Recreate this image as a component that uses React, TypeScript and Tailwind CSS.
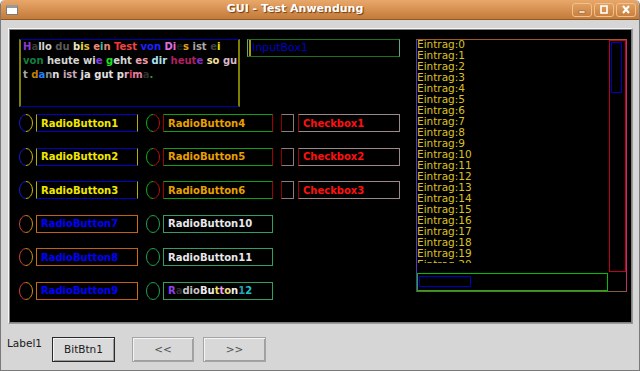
import React from 'react';

type Seg = [string, string];

const memo: Seg[][] = [
  [
    ['H', '#8a3ad0'], ['a', '#3a3a3a'], ['llo ', '#d4d4d4'], ['du ', '#5a5a5a'],
    ['b', '#e4e4c8'], ['i', '#e8e040'], ['s ', '#e0c040'],
    ['e', '#f08878'], ['i', '#40c0a8'], ['n ', '#e88878'],
    ['T', '#ff3030'], ['est ', '#e84848'], ['von ', '#2020ff'], ['Di', '#e070e0'],
    ['e', '#1e1e1e'], ['s ', '#e0a020'], ['ist ', '#a8a8a8'], ['e', '#404040'], ['i', '#e8e000'],
  ],
  [
    ['von ', '#108040'], ['heute wi', '#d4d4d4'], ['e ', '#8040e0'], ['g', '#20e020'],
    ['eht ', '#d4d4d4'], ['es ', '#f0a0b0'], ['dir ', '#b0e0f0'], ['heut', '#b02060'],
    ['e ', '#8030c8'], ['so ', '#f0e0a0'], ['gu', '#d8b8c8'],
  ],
  [
    ['t ', '#a8a8a8'], ['d', '#c08000'], ['a', '#2080ff'], ['n', '#909090'], ['n ', '#e0e0e0'],
    ['ist ', '#c8a8b8'], ['ja gut p', '#e0e0e0'], ['r', '#e0b0c8'], ['i', '#e04060'],
    ['m', '#e080a0'], ['a', '#303030'], ['.', '#20a020'],
  ],
];

const rb12: Seg[] = [
  ['R', '#9040f0'], ['a', '#303030'], ['dio', '#c4c4c4'], ['Bu', '#ececec'], ['t', '#f0e060'],
  ['t', '#f0a0f0'], ['o', '#f0e080'], ['n', '#f0f0f0'], ['1', '#20a0b0'], ['2', '#20c0d0'],
];

const Oval = ({ l, r }: { l: string; r: string }) => (
  <svg width="14" height="18" viewBox="0 0 14 18" className="shrink-0">
    <path d="M7 0.5 A6.5 8.5 0 0 0 7 17.5" fill="none" stroke={l} />
    <path d="M7 0.5 A6.5 8.5 0 0 1 7 17.5" fill="none" stroke={r} />
  </svg>
);

const Segs = ({ s }: { s: Seg[] }) => (
  <>
    {s.map(([t, c], i) => (
      <span key={i} style={{ color: c }}>{t}</span>
    ))}
  </>
);

type Radio = { l: string; r: string; box: string; text: string; label: React.ReactNode };

const col1: Radio[] = [
  { l: '#1818d8', r: '#c8b800', box: 'border-y-[#0000c8] border-x-[#b8b000]', text: 'text-[#f0e800]', label: 'RadioButton1' },
  { l: '#1818d8', r: '#c8b800', box: 'border-y-[#0000c8] border-x-[#b8b000]', text: 'text-[#f0e800]', label: 'RadioButton2' },
  { l: '#1818d8', r: '#c8b800', box: 'border-y-[#0000c8] border-x-[#b8b000]', text: 'text-[#f0e800]', label: 'RadioButton3' },
  { l: '#d04040', r: '#d09000', box: 'border-y-[#c06018] border-x-[#c87010]', text: 'text-[#0000ff]', label: 'RadioButton7' },
  { l: '#d04040', r: '#d09000', box: 'border-y-[#c06018] border-x-[#c87010]', text: 'text-[#0000ff]', label: 'RadioButton8' },
  { l: '#d04040', r: '#d09000', box: 'border-y-[#c06018] border-x-[#c87010]', text: 'text-[#0000ff]', label: 'RadioButton9' },
];

const col2: Radio[] = [
  { l: '#10b010', r: '#b01010', box: 'border-y-[#10a010] border-x-[#a00000]', text: 'text-[#e8a000]', label: 'RadioButton4' },
  { l: '#10b010', r: '#b01010', box: 'border-y-[#10a010] border-x-[#a00000]', text: 'text-[#e8a000]', label: 'RadioButton5' },
  { l: '#10b010', r: '#b01010', box: 'border-y-[#10a010] border-x-[#a00000]', text: 'text-[#e8a000]', label: 'RadioButton6' },
  { l: '#20a050', r: '#20a050', box: 'border-[#30a060]', text: 'text-[#e8e8e8]', label: 'RadioButton10' },
  { l: '#20a050', r: '#20a050', box: 'border-[#30a060]', text: 'text-[#e8e8e8]', label: 'RadioButton11' },
  { l: '#20a050', r: '#20a050', box: 'border-[#30a060]', text: 'text-[#e8e8e8]', label: <Segs s={rb12} /> },
];

const checks = ['Checkbox1', 'Checkbox2', 'Checkbox3', '', '', ''];

const items = Array.from({ length: 21 }, (_, i) => `Eintrag:${i}`);

const App: React.FC = () => {
  return (
    <div className="w-[640px] h-[371px] overflow-hidden flex flex-col bg-[#d6d6d6] font-['DejaVu_Sans','Liberation_Sans',sans-serif] border-x border-b border-[#7a7a7a] rounded-t-[5px]">
      {/* Titelleiste */}
      <div className="h-[20px] shrink-0 flex items-center bg-linear-to-b from-[#e8a86a] to-[#c47a38] border-b border-[#8c5a28] rounded-t-[5px]">
        <div className="ml-[5px] w-[12px] h-[10px] bg-white border border-[#7a7a7a] border-t-[3px] border-t-[#9a9a9a]" />
        <div className="flex-1 text-center text-white text-[11px] font-bold [text-shadow:1px_1px_1px_#6a3c14]">
          GUI - Test Anwendung
        </div>
        <div className="flex gap-[2px] mr-[3px]">
          {['min', 'max', 'close'].map(k => (
            <div key={k} className="w-[20px] h-[14px] rounded-[3px] border border-[#f2c08c] bg-linear-to-b from-[#e0a060] to-[#c98040] flex items-center justify-center">
              <svg width="10" height="9" viewBox="0 0 10 9">
                {k === 'min' && <rect x="2" y="6" width="6" height="2" fill="#fff" stroke="#6a3c14" strokeWidth="0.4" />}
                {k === 'max' && <rect x="2" y="1" width="6" height="7" fill="none" stroke="#fff" strokeWidth="1.6" />}
                {k === 'close' && <path d="M2 1 L8 8 M8 1 L2 8" stroke="#fff" strokeWidth="2" />}
              </svg>
            </div>
          ))}
        </div>
      </div>

      {/* Arbeitsfläche */}
      <div className="ml-[7px] mt-[8px] w-[625px] h-[296px] border border-t-[#f6f6f6] border-l-[#f6f6f6] border-r-[#9a9a9a] border-b-[#9a9a9a]">
        <div className="w-full h-full bg-black border border-[#808080] flex pl-[9px] pt-[9px]">
          <div className="w-[381px] flex flex-col">
            <div className="flex items-start">
              <div className="w-[221px] h-[68px] border-y border-y-[#0000b0] border-x-2 border-x-[#808000] pl-[2px] text-[10px] leading-[14px] font-bold whitespace-pre">
                {memo.map((line, i) => (
                  <div key={i}><Segs s={line} /></div>
                ))}
              </div>
              <div className="ml-[7px] w-[153px] h-[18px] border-y border-y-[#207020] border-x border-x-[#60a888] flex items-center">
                <div className="w-[2px] h-full bg-[#a0a000] ml-[1px]" />
                <span className="ml-[1px] text-[11px] text-[#0000c8]">InputBox1</span>
              </div>
            </div>

            <div className="mt-[7px] flex flex-col gap-[15.6px]">
              {col1.map((a, i) => {
                const b = col2[i];
                const c = checks[i];
                return (
                  <div key={i} className="flex items-center h-[18px] text-[10px] font-bold">
                    <Oval l={a.l} r={a.r} />
                    <div className={`ml-[3px] w-[102px] h-[18px] border flex items-center pl-[4px] ${a.box} ${a.text}`}>{a.label}</div>
                    <div className="ml-[8px]"><Oval l={b.l} r={b.r} /></div>
                    <div className={`ml-[3px] w-[110px] h-[18px] border flex items-center pl-[4px] ${b.box} ${b.text}`}>{b.label}</div>
                    {c && (
                      <>
                        <div className="ml-[8px] w-[13px] h-[18px] border border-y-[#8c7c7c] border-l-[#900000] border-r-[#8c7c7c]" />
                        <div className="ml-[4px] w-[102px] h-[18px] border border-y-[#9c8888] border-l-[#a00000] border-r-[#9c8888] flex items-center pl-[4px] text-[#ff1010]">{c}</div>
                      </>
                    )}
                  </div>
                );
              })}
            </div>
          </div>

          {/* Listbox */}
          <div className="ml-[16px] w-[211px] h-[253px] border border-t-[#a05a20] border-l-[#6030c0] border-r-[#c03070] border-b-[#806040] flex flex-col">
            <div className="flex h-[232px]">
              <div className="flex-1 h-[224px] overflow-hidden text-[10.5px] leading-[11px] text-[#dcc024] -mt-[1px]">
                {items.map(t => <div key={t}>{t}</div>)}
              </div>
              <div className="w-[17px] h-[232px] border border-[#c00020] pt-[1px] pl-[1px]">
                <div className="w-[11px] h-[51px] border border-[#0000c0]" />
              </div>
            </div>
            <div className="mt-[1px] w-[191px] h-[18px] border border-[#00c000] pl-[1px] pt-[2px]">
              <div className="w-[52px] h-[11px] border border-[#0000c0]" />
            </div>
          </div>
        </div>
      </div>

      {/* Fußleiste */}
      <div className="flex items-start mt-[13px] pl-[6px] text-[10.5px]">
        <span className="leading-[12px] text-[#1a1a1a] w-[38px]">Label1</span>
        <button className="ml-[7px] w-[63px] h-[25px] border border-[#2a2a2a] bg-[#dadada] text-[#1a1a1a] shadow-[inset_1px_1px_0_#f4f4f4,inset_-1px_-1px_0_#9a9a9a]">
          BitBtn1
        </button>
        <button className="ml-[17px] w-[62px] h-[25px] border border-[#a4a4a4] bg-[#d8d8d8] text-[#505050] shadow-[inset_1px_1px_0_#f4f4f4,inset_-1px_-1px_0_#a0a0a0]">
          &lt;&lt;
        </button>
        <button className="ml-[9px] w-[63px] h-[25px] border border-[#a4a4a4] bg-[#d8d8d8] text-[#505050] shadow-[inset_1px_1px_0_#f4f4f4,inset_-1px_-1px_0_#a0a0a0]">
          &gt;&gt;
        </button>
      </div>
    </div>
  );
};

export default App;
